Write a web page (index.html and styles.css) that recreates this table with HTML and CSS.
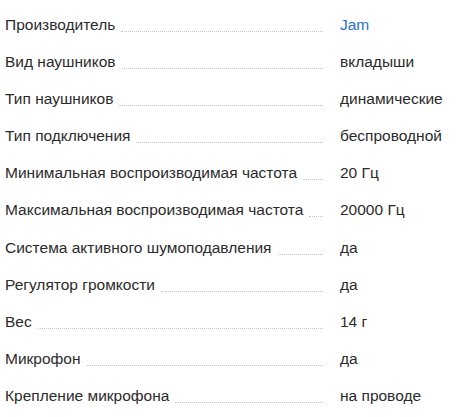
FILE: index.html
```html
<!DOCTYPE html>
<html lang="ru">
<head>
<meta charset="utf-8">
<link rel="stylesheet" href="styles.css">
</head>
<body>
<div class="specs">
  <div class="row"><div class="name"><span class="label">Производитель</span><span class="dots"></span></div><div class="value"><a class="link" href="#">Jam</a></div></div>
  <div class="row"><div class="name"><span class="label">Вид наушников</span><span class="dots"></span></div><div class="value">вкладыши</div></div>
  <div class="row"><div class="name"><span class="label">Тип наушников</span><span class="dots"></span></div><div class="value">динамические</div></div>
  <div class="row"><div class="name"><span class="label">Тип подключения</span><span class="dots"></span></div><div class="value">беспроводной</div></div>
  <div class="row"><div class="name"><span class="label">Минимальная воспроизводимая частота</span><span class="dots"></span></div><div class="value">20 Гц</div></div>
  <div class="row"><div class="name"><span class="label">Максимальная воспроизводимая частота</span><span class="dots"></span></div><div class="value">20000 Гц</div></div>
  <div class="row"><div class="name"><span class="label">Система активного шумоподавления</span><span class="dots"></span></div><div class="value">да</div></div>
  <div class="row"><div class="name"><span class="label">Регулятор громкости</span><span class="dots"></span></div><div class="value">да</div></div>
  <div class="row"><div class="name"><span class="label">Вес</span><span class="dots"></span></div><div class="value">14 г</div></div>
  <div class="row"><div class="name"><span class="label">Микрофон</span><span class="dots"></span></div><div class="value">да</div></div>
  <div class="row"><div class="name"><span class="label">Крепление микрофона</span><span class="dots"></span></div><div class="value">на проводе</div></div>
</div>
</body>
</html>
```

FILE: styles.css
```css
html, body {
  margin: 0;
  padding: 0;
  background: #fff;
}
body {
  font-family: "Liberation Sans", Arial, sans-serif;
  font-size: 15.5px;
  color: #2b2b2b;
}
.specs {
  padding: 6px 0 0 5px;
}
.row {
  display: flex;
  align-items: baseline;
  height: 37.1px;
  line-height: 37.1px;
}
.name {
  display: flex;
  align-items: baseline;
  width: 318px;
  flex: none;
}
.label {
  white-space: nowrap;
  flex: none;
}
.dots {
  flex: 1;
  margin-left: 6px;
  border-bottom: 1px dotted #c4c4c4;
  position: relative;
  top: 2px;
  height: 0;
}
.value {
  margin-left: 17px;
  white-space: nowrap;
}
.link {
  color: #2a6fd6;
  text-decoration: none;
}
```
